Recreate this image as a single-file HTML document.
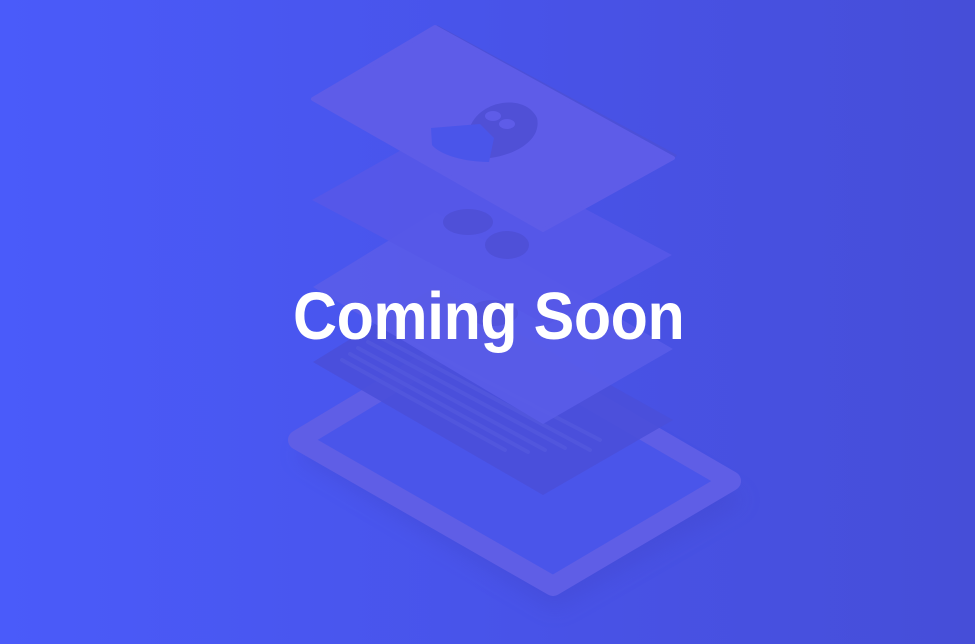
<!DOCTYPE html>
<html><head><meta charset="utf-8"><style>
html,body{margin:0;padding:0}
body{width:975px;height:644px;overflow:hidden;position:relative;background:linear-gradient(90deg,#4a5bfa 0%,#4852e6 60%,#464ed8 100%)}
svg{position:absolute;left:0;top:0}
.t{position:absolute;left:293px;top:277px;width:395px;height:80px;font-family:"Liberation Sans",sans-serif;font-weight:bold;font-size:67px;color:#fff;white-space:nowrap;line-height:80px}
.t span{display:inline-block;transform:scaleX(0.91);transform-origin:0 0;letter-spacing:-0.5px}
</style></head><body>
<svg width="975" height="644" viewBox="0 0 975 644">
<defs><filter id="b"><feGaussianBlur stdDeviation="10"/></filter></defs>
<!-- phone shadow -->
<polygon points="295,455 480,345 745,500 555,610" fill="#3f45c8" opacity="0.35" filter="url(#b)"/>
<!-- phone -->
<polygon points="298,440 476,333 731,481 553,586" fill="#4a55ea" stroke="#5f5ee6" stroke-width="20" stroke-linejoin="round"/>
<!-- card 4 dark with lines -->
<polygon points="313,362 435,287 673,420 543,495" fill="#4a4fd9" opacity="0.9"/>
<g stroke="#5156dd" stroke-width="4" stroke-linecap="round">
<line x1="342" y1="360" x2="505" y2="450"/><line x1="350" y1="354" x2="528" y2="452"/><line x1="358" y1="348" x2="545" y2="450"/><line x1="368" y1="342" x2="565" y2="448"/><line x1="378" y1="336" x2="590" y2="450"/><line x1="388" y1="330" x2="600" y2="440"/>
</g>
<!-- card 3 -->
<polygon points="313,287 435,212 673,349 543,424" fill="#5a5de9" opacity="0.85"/>
<ellipse cx="493" cy="313" rx="25" ry="13" fill="#5254dc"/>
<!-- card 2 -->
<polygon points="312,200 437,130 672,255 547,325" fill="#5658e8" opacity="0.9"/>
<ellipse cx="468" cy="222" rx="25" ry="13" fill="#4f50d8"/>
<ellipse cx="507" cy="245" rx="22" ry="14" fill="#4f50d8"/>
<!-- card 1 -->
<polygon points="437,25 677,155 673,160 440,31" fill="#4c50d8"/>
<polygon points="313,99 435,27 673,158 543,230" fill="#5e5ce8" stroke="#5e5ce8" stroke-width="4" stroke-linejoin="round"/>
<path d="M470,127 C480,100 525,93 537,118 C542,140 515,155 490,158 L478,150 Z" fill="#5050d6"/>
<path d="M431,128 L480,124 L494,138 L489,162 C465,162 440,155 432,145 Z" fill="#4a55ea"/>
<ellipse cx="493" cy="116" rx="8" ry="5" fill="#5e5ce8"/>
<ellipse cx="507" cy="124" rx="8" ry="5" fill="#5e5ce8"/>
</svg>
<div class="t"><span>Coming Soon</span></div>
</body></html>
